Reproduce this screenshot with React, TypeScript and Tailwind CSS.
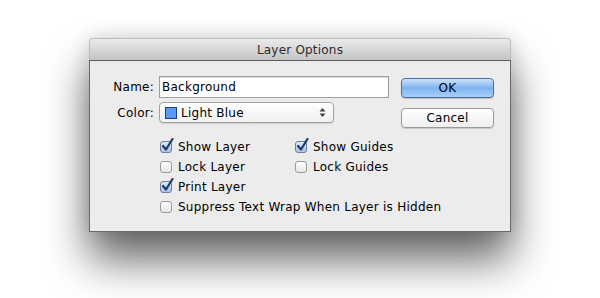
import React from "react";

const font = { fontFamily: '"DejaVu Sans", "Lucida Grande", sans-serif' };

function Checkbox({ checked }: { checked?: boolean }) {
  return (
    <span className="relative inline-block w-[12px] h-[12px] shrink-0">
      <span
        className={`absolute inset-0 rounded-[3px] border ${
          checked
            ? "border-[#6c7f9c] bg-gradient-to-b from-[#dbe8f8] to-[#a9c4e8]"
            : "border-[#9a9a9a] bg-gradient-to-b from-[#ffffff] to-[#e6e6e6]"
        }`}
      />
      {checked && (
        <svg className="absolute left-[1px] top-[-3px]" width="13" height="14" viewBox="0 0 13 14">
          <path
            d="M2 8 L5 11.5 L11.5 1"
            fill="none"
            stroke="#1d3b6a"
            strokeWidth="2.2"
            strokeLinecap="round"
            strokeLinejoin="round"
          />
        </svg>
      )}
    </span>
  );
}

function Option({ label, checked }: { label: string; checked?: boolean }) {
  return (
    <label className="flex items-center gap-[6px] h-[20px] text-[12px] tracking-[0.25px] text-black whitespace-nowrap">
      <Checkbox checked={checked} />
      <span>{label}</span>
    </label>
  );
}

export default function App() {
  return (
    <div className="w-[600px] h-[298px] bg-white flex justify-center pt-[38px]" style={font}>
      <div className="w-[422px] h-[194px] flex flex-col rounded-t-[4px] shadow-[0_28px_44px_rgba(0,0,0,0.6),0_0_20px_rgba(0,0,0,0.14)]">
        {/* title bar */}
        <div className="h-[22px] shrink-0 rounded-t-[4px] border border-b-0 border-[#bdbdbd] bg-gradient-to-b from-[#ebebeb] to-[#c4c4c4] flex items-center justify-center text-[12px] tracking-[0.2px] text-[#2c2c2c]">
          Layer Options
        </div>
        <div className="h-[1px] bg-[#5d5d5d]" />
        {/* body */}
        <div className="flex-1 bg-[#ececec] border border-t-0 border-[#6a6a6a] pt-[15px]">
          <div className="flex">
            <div className="flex flex-col gap-[4px]">
              <div className="flex items-center">
                <span className="w-[69px] pr-[5px] text-right text-[12px] tracking-[0.25px] text-black">Name:</span>
                <div className="w-[230px] h-[22px] bg-white border border-[#9e9e9e] shadow-[inset_0_1px_1px_rgba(0,0,0,0.15)] flex items-center px-[2px] text-[12px] tracking-[0.25px] text-black">
                  Background
                </div>
              </div>
              <div className="flex items-center">
                <span className="w-[69px] pr-[5px] text-right text-[12px] tracking-[0.25px] text-black">Color:</span>
                <div className="w-[175px] h-[21px] rounded-[4px] border border-[#a3a3a3] bg-gradient-to-b from-[#ffffff] to-[#f0f0f0] shadow-[0_1px_1px_rgba(0,0,0,0.12)] flex items-center pl-[5px] pr-[7px] text-[12px] tracking-[0.25px] text-black">
                  <span className="w-[12px] h-[12px] border border-[#1e3f7a] bg-[#5a9bf7] mr-[4px]" />
                  <span className="flex-1">Light Blue</span>
                  <svg width="7" height="11" viewBox="0 0 7 11">
                    <path d="M3.5 1 L6.5 4.5 L0.5 4.5 Z" fill="#444" />
                    <path d="M3.5 10 L6.5 6.5 L0.5 6.5 Z" fill="#444" />
                  </svg>
                </div>
              </div>
            </div>
            <div className="ml-[12px] pt-[2px] flex flex-col gap-[10px]">
              <button className="w-[93px] h-[20px] rounded-[4px] border border-[#4b6fa3] bg-gradient-to-b from-[#cfe3fb] via-[#7fb3ef] to-[#a8d0fa] shadow-[0_1px_1px_rgba(0,0,0,0.2)] text-[12px] tracking-[0.25px] text-black leading-none">
                OK
              </button>
              <button className="w-[93px] h-[20px] rounded-[4px] border border-[#9a9a9a] bg-gradient-to-b from-[#ffffff] to-[#efefef] shadow-[0_1px_1px_rgba(0,0,0,0.15)] text-[12px] tracking-[0.25px] text-black leading-none">
                Cancel
              </button>
            </div>
          </div>
          {/* options */}
          <div className="ml-[70px] mt-[9px] flex flex-col">
            <div className="flex">
              <div className="w-[135px]">
                <Option label="Show Layer" checked />
              </div>
              <Option label="Show Guides" checked />
            </div>
            <div className="flex">
              <div className="w-[135px]">
                <Option label="Lock Layer" />
              </div>
              <Option label="Lock Guides" />
            </div>
            <Option label="Print Layer" checked />
            <Option label="Suppress Text Wrap When Layer is Hidden" />
          </div>
        </div>
      </div>
    </div>
  );
}
